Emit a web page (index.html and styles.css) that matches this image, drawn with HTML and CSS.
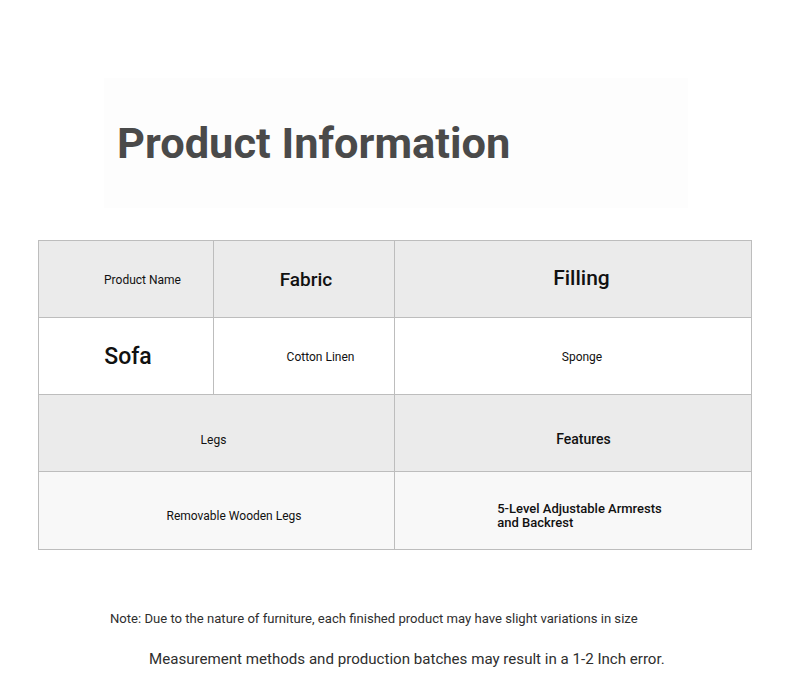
FILE: index.html
```html
<!DOCTYPE html>
<html lang="en">
<head>
<meta charset="utf-8">
<title>Product Information</title>
<link rel="stylesheet" href="styles.css">
</head>
<body>
<div class="page">
  <div class="title-box">
    <h1 class="title">Product Information</h1>
  </div>
  <div class="spec-grid">
    <div class="cell head c-name"><span class="t12">Product Name</span></div>
    <div class="cell head c-fabric"><span class="t19">Fabric</span></div>
    <div class="cell head c-filling"><span class="t21">Filling</span></div>
    <div class="cell plain c-sofa"><span class="t23">Sofa</span></div>
    <div class="cell plain c-cotton"><span class="t12">Cotton Linen</span></div>
    <div class="cell plain c-sponge"><span class="t12">Sponge</span></div>
    <div class="cell head wide low c-legs"><span class="t12">Legs</span></div>
    <div class="cell head low c-features"><span class="t14">Features</span></div>
    <div class="cell soft wide low c-removable"><span class="t12">Removable Wooden Legs</span></div>
    <div class="cell soft low c-adjust"><span class="block">5-Level Adjustable Armrests<br>and Backrest</span></div>
  </div>
  <p class="note">Note: Due to the nature of furniture, each finished product may have slight variations in size</p>
  <p class="note2">Measurement methods and production batches may result in a 1-2 Inch error.</p>
</div>
</body>
</html>
```

FILE: styles.css
```css
html, body {
  margin: 0;
  padding: 0;
  background: #ffffff;
}
body {
  font-family: Roboto, "Liberation Sans", sans-serif;
  color: #111111;
}
.page {
  width: 790px;
  height: 692px;
  overflow: hidden;
  padding-top: 78px;
  box-sizing: border-box;
}
.title-box {
  margin-left: 104px;
  width: 584px;
  height: 130px;
  background: #fdfdfd;
  display: flex;
  align-items: center;
  padding-left: 13px;
  box-sizing: border-box;
}
.title {
  margin: 0;
  font-size: 43.4px;
  font-weight: 700;
  color: #4a4a4a;
  line-height: 1;
  position: relative;
  top: 1px;
}
.spec-grid {
  margin-top: 32px;
  margin-left: 38px;
  width: 714px;
  display: grid;
  grid-template-columns: 174px 180px 356px;
  grid-template-rows: 76px 76px 76px 77px;
  gap: 1px;
  background: #bdbdbd;
  border: 1px solid #bdbdbd;
  box-sizing: border-box;
}
.cell {
  display: flex;
  align-items: center;
  justify-content: center;
}
.head { background: #ebebeb; }
.plain { background: #ffffff; }
.soft { background: #f8f8f8; }
.wide { grid-column: span 2; }
.low { padding-top: 12px; }
.t12 { font-size: 12px; font-weight: 400; }
.t14 { font-size: 14px; font-weight: 500; }
.t19 { font-size: 19px; font-weight: 500; }
.t21 { font-size: 21px; font-weight: 500; }
.t23 { font-size: 23px; font-weight: 500; }
.block { font-size: 13px; font-weight: 500; line-height: 14px; text-align: left; }
.c-name { padding-left: 33px; padding-top: 1px; }
.c-fabric { padding-left: 4px; }
.c-filling { padding-left: 17px; padding-bottom: 3px; }
.c-sofa { padding-left: 4px; padding-top: 1px; }
.c-cotton { padding-left: 33px; padding-top: 1px; }
.c-sponge { padding-left: 18px; padding-top: 1px; }
.c-legs { padding-right: 6px; padding-top: 13px; }
.c-features { padding-left: 21px; }
.c-removable { padding-left: 35px; padding-top: 10px; }
.c-adjust { padding-left: 13px; padding-top: 11px; }
.note {
  margin: 59px 0 0 110px;
  font-size: 13.1px;
  line-height: 20px;
  color: #2e2e2e;
}
.note2 {
  margin: 19px 0 0 149px;
  font-size: 15.1px;
  line-height: 22px;
  color: #2e2e2e;
}
```
